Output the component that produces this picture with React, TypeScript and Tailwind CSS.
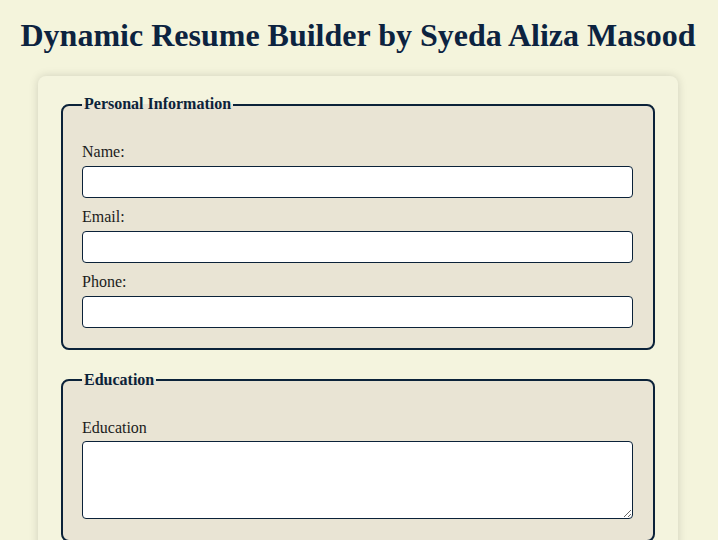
type FieldProps = {
  label: string,
  area?: boolean
}

function Field(props: FieldProps) {
  const { label, area } = props;

  return (
    <div className="mb-[10.5px]">
      <label className="block mb-1 text-[16px] leading-[18.4px] text-[#1b1b1b]">{label}</label>
      {area ? (
        <textarea className="block w-full h-[78px] bg-white border border-[#0b2239] rounded-[4px]" />
      ) : (
        <input type="text" className="block w-full h-8 bg-white border border-[#0b2239] rounded-[4px]" />
      )}
    </div>
  )
}

type SectionProps = {
  title: string,
  children: any
}

function Section(props: SectionProps) {
  const { title, children } = props;

  return (
    <fieldset className="mx-0 border-2 border-[#0b2239] rounded-lg bg-[#e9e4d4] pl-[19px] pr-5 pb-[10px]">
      <legend className="px-[2px] text-[16px] leading-[18.4px] font-bold text-[#0b2239]">{title}</legend>
      <div className="pt-[29.5px]">
        {children}
      </div>
    </fieldset>
  )
}

export default function App() {
  return (
    <div className="min-h-[540px] bg-[#f4f4dc] pt-[17.5px] pr-[2px] font-['Liberation_Serif',_'Times_New_Roman',_serif]">
      <h1 className="text-center text-[32px] leading-[35.4px] font-bold text-[#0c2340]">
        Dynamic Resume Builder by Syeda Aliza Masood
      </h1>
      <div className="mt-[23px] mx-auto w-[640px] rounded-lg bg-[#f4f4de] px-[23px] pt-[19.5px] pb-5 shadow-[0_0_10px_rgba(0,0,0,0.15)]">
        <Section title="Personal Information">
          <Field label="Name:" />
          <Field label="Email:" />
          <Field label="Phone:" />
        </Section>
        <div className="h-[21px]" />
        <Section title="Education">
          <Field label="Education" area />
        </Section>
      </div>
    </div>
  )
}
